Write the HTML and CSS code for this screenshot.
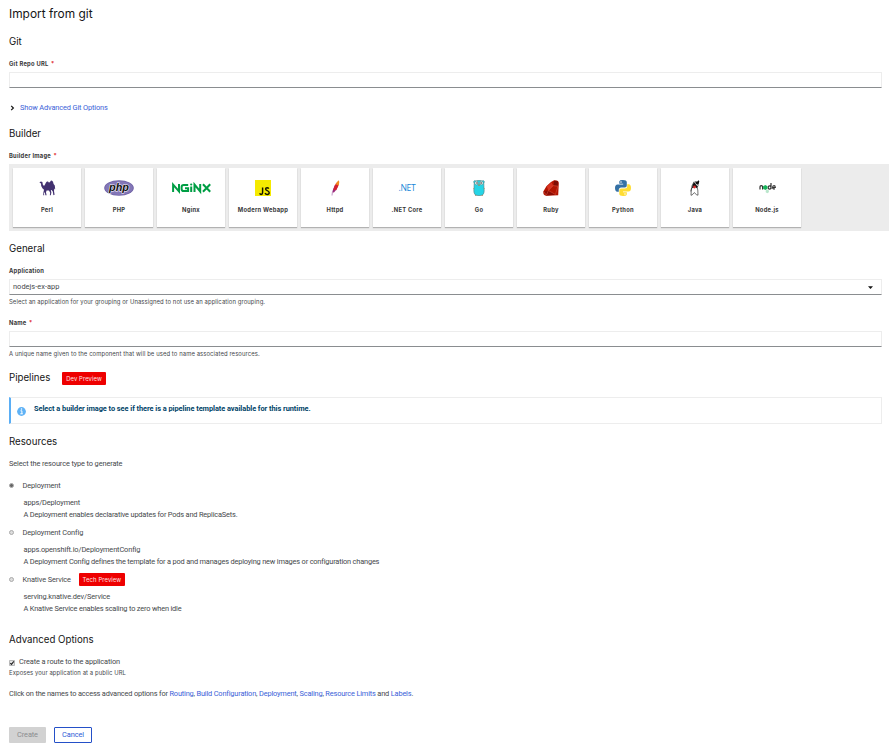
FILE: index.html
```html
<!DOCTYPE html>
<html lang="en">
<head>
<meta charset="utf-8">
<title>Import from git</title>
<link rel="stylesheet" href="styles.css">
</head>
<body>
<form class="page">
  <h1 class="title">Import from git</h1>

  <section class="section git">
    <h2>Git</h2>
    <label class="label">Git Repo URL <span class="req">*</span></label>
    <div class="input"></div>
    <a class="toggle"><svg width="5" height="6" viewBox="0 0 5 6"><path d="M1.2.8 3.4 3 1.2 5.2" fill="none" stroke="#151515" stroke-width="1.2"/></svg>Show Advanced Git Options</a>
  </section>

  <section class="section builder">
    <h2>Builder</h2>
    <label class="label">Builder Image <span class="req">*</span></label>
    <div class="tiles">
      <div class="tile">
        <svg width="17" height="16" viewBox="0 0 17 16"><path d="M.4 2.5 1.8 1.4 3.4 2 3.8 4.6 5 6 6 4.4 7 2.6 8 1.4 9 1.6 9.8 2.6 10.8 2.2 11.8.8 12.8.4 14 1.8 14.6 4 15.8 5.6 16.2 9.2 15.4 8.6 15 11 15.6 14.8 14.4 15.3 13.8 11.6 12.6 10 11.8 10.2 12.4 12.6 11.8 15.3 10.8 15.2 11.2 12.8 10 10.4 7.6 10.6 7 12.2 7.6 15.3 6.4 15.2 5.8 12 5 13.4 5.2 15.3 4.2 15.2 4.4 12.4 5 9.8 3.4 8.2 2.2 6 2 3.6Z" fill="#423170"/></svg>
        <span>Perl</span>
      </div>
      <div class="tile">
        <svg width="30" height="16" viewBox="0 0 30 16"><ellipse cx="15" cy="8" rx="14.8" ry="7.8" fill="#6f62a6"/><ellipse cx="15" cy="8" rx="13.8" ry="6.9" fill="#8377b7"/><text class="php-logo" x="15" y="10.8" text-anchor="middle" textLength="20" lengthAdjust="spacingAndGlyphs">php</text></svg>
        <span>PHP</span>
      </div>
      <div class="tile">
        <svg width="39" height="16" viewBox="0 0 39 16"><path d="M1.1 12V4.6L7 11.4V4M16.2 4.9H11.7Q9.6 4.9 9.6 7v2q0 2.1 2.1 2.1h4.4V8.3H13M19.2 6.6V12M22.5 12V4.6L28.2 11.4V4M31 4.2 38.2 11.8M38.2 4.2 31 11.8" fill="none" stroke="#009e44" stroke-width="2"/><circle cx="19.2" cy="4.5" r="1.1" fill="#009e44"/></svg>
        <span>Nginx</span>
      </div>
      <div class="tile">
        <svg width="16" height="16" viewBox="0 0 16 16"><path d="M0 0h16v16H0z" fill="#f5ea00"/><path d="M7.6 7.4v5.2q0 1.8-1.5 1.8-1 0-1.4-1.1M13.8 8.7q-.6-1-1.7-1-1.5 0-1.5 1.3 0 1 1.6 1.6 2 .7 2 2.1 0 1.7-2 1.7-1.5 0-2.2-1.3" fill="none" stroke="#151500" stroke-width="1.45"/></svg>
        <span>Modern Webapp</span>
      </div>
      <div class="tile">
        <svg width="9" height="16" viewBox="0 0 9 16"><path d="M1 15.5Q1 12.4 2.4 9.6" fill="none" stroke="#b88abf" stroke-width=".9"/><path d="M1.6 12.7Q1.7 8.8 4 5L7 5.6Q6.4 9.8 3.2 12.2Z" fill="#9b2779"/><path d="M2.5 9.8Q3 6 5.2 3L7.9 2.5Q8 6.5 5.2 10.2Z" fill="#d4202d"/><path d="M4.6 4.3Q5.6 1.5 7.8.2 9 2 7.8 5.5Z" fill="#f28b20"/></svg>
        <span>Httpd</span>
      </div>
      <div class="tile">
        <svg width="24" height="16" viewBox="0 0 24 16"><text class="net-logo" x="12" y="11.2" text-anchor="middle">.NET</text></svg>
        <span>.NET Core</span>
      </div>
      <div class="tile">
        <svg width="12" height="16" viewBox="0 0 12 16"><path d="M1.2 3.2Q-.2 1.2 1.8.6L3 1Q6-.6 9 1l1.2-.4Q12.2 1.2 10.8 3.2L11 8q.8 6-2 7.2-3 .9-6 0Q.2 14 1 8Z" fill="#25d5e6" stroke="#547b80" stroke-width=".6"/><circle cx="3.6" cy="3" r="1.8" fill="#fff" stroke="#466" stroke-width=".4"/><circle cx="8.3" cy="3" r="1.8" fill="#fff" stroke="#466" stroke-width=".4"/><circle cx="4" cy="3" r=".7"/><circle cx="8.1" cy="3" r=".7"/><path d="M5 4.4h2v1.3H5z" fill="#9d8a67"/><path d="M.2 8.6h1M10.8 8.6h1M2 15.6h1.4M8.6 15.6H10" stroke="#b49b77"/></svg>
        <span>Go</span>
      </div>
      <div class="tile">
        <svg width="16" height="16" viewBox="0 0 16 16"><path d="M11.2.3Q16 0 15.8 3.6L15.2 15.3 3 15.8Q0 15.6.3 11.6L3.4 6.2 8 2Z" fill="#b11401"/><path d="M11.2.8 15 1.4 14.8 6 10.6 5.6Z" fill="#7d0d05"/><path d="M3.8 6.4 8.6 2.2 10.2 5.8 5.4 10.5Z" fill="#d8321f"/><path d="M.7 11.8 5.4 10.5 12.6 14.8 3.4 15.4Z" fill="#8b0c04"/><path d="m5.4 10.5 4.8-4.9 4.9.6M1 11.9l2.2 3M5.4 10.5l-2 4.6M5.4 10.5l7 4 2.5-8.2" fill="none" stroke="#e2604c" stroke-width=".45"/></svg>
        <span>Ruby</span>
      </div>
      <div class="tile">
        <svg width="16" height="16" viewBox="0 0 16 16"><path d="M8 0C4.6 0 4.3 1 4.3 2v1.8h3.9v.6H2.5C1 4.4 0 5.6 0 8s.9 3.7 2.3 3.7h1.5V9.8c0-1.3 1-2.3 2.3-2.3h3.8c1.1 0 1.9-.9 1.9-2V2C11.8.7 10.4 0 8 0Z" fill="#3571a5"/><path d="M8 16c3.4 0 3.8-1 3.8-2v-1.8H8v-.6h5.6C15 11.6 16 10.4 16 8s-.9-3.7-2.3-3.7h-1.5v1.9c0 1.3-1 2.3-2.3 2.3H6.2c-1.1 0-1.9.9-1.9 2V14c0 1.3 1.3 2 3.7 2Z" fill="#fd3"/><circle cx="6" cy="2.1" r=".75" fill="#fff"/><circle cx="10" cy="13.9" r=".75" fill="#fff"/></svg>
        <span>Python</span>
      </div>
      <div class="tile">
        <svg width="10" height="16" viewBox="0 0 10 16"><path d="M4.2 1.5 2 5.8 1.2 11 1 15.3 2.3 14.8 4.2 12.6 6.7 14.8 8 15.2 7.8 10 6.8 6" fill="#fff" stroke="#333" stroke-width=".7"/><path d="M4 2 5 3.2 7.6 6.6 7 8.2 5.2 7 2 8.2 2.4 5.4Z" fill="#111"/><path d="M5.4.9 7 1.8 8.6.3 9.3 1.2 8.7 4 7.3 4.7 5.4 3.2Z" fill="#111"/><circle cx="4.5" cy="7" r="1.4" fill="#dc2b2b"/><path d="M1.6 8 .7 11.4M7.4 7 8.5 4.5" stroke="#222" stroke-width=".6"/></svg>
        <span>Java</span>
      </div>
      <div class="tile">
        <svg width="17" height="16" viewBox="0 0 17 16"><path d="M1 9.4V6.8Q1 5.6 2.3 5.6T3.6 6.8v2.6M12 3v6M12 7.5a1.4 1.6 0 1 1-2.8 0 1.4 1.6 0 1 1 2.8 0M13.6 7.5h2.7Q16.2 5.6 15 5.6q-1.4 0-1.4 1.9 0 1.7 2.3 1.3" fill="none" stroke="#333" stroke-width="1.2"/><path d="m6.3 5 2.2 1.2v2.6L6.3 10 4.1 8.8V6.2Z" fill="#17b35a"/><path d="m8.3 9.6 1.6.9v1.8l-1.6.9-1.6-.9v-1.8Z" fill="#b9e6cb"/></svg>
        <span>Node.js</span>
      </div>
    </div>
  </section>

  <section class="section general">
    <h2>General</h2>
    <label class="label">Application</label>
    <div class="input select"><span>nodejs-ex-app</span><svg width="5" height="3" viewBox="0 0 5 3"><path d="M0 .2h5L2.5 2.9Z" fill="#151515"/></svg></div>
    <p class="help">Select an application for your grouping or Unassigned to not use an application grouping.</p>
    <label class="label name">Name <span class="req">*</span></label>
    <div class="input"></div>
    <p class="help">A unique name given to the component that will be used to name associated resources.</p>
  </section>

  <section class="section pipelines">
    <div class="heading-row"><h2>Pipelines</h2><span class="badge">Dev Preview</span></div>
    <div class="alert">
      <svg width="9" height="9" viewBox="0 0 9 9"><circle cx="4.5" cy="4.5" r="4.4" fill="#5fb2f6"/><path d="M3.5 3.8h1.4v3M3.3 6.8h2.5" fill="none" stroke="#fff"/><circle cx="4.5" cy="2.1" r=".75" fill="#fff"/></svg>
      <strong>Select a builder image to see if there is a pipeline template available for this runtime.</strong>
    </div>
  </section>

  <section class="section resources">
    <h2>Resources</h2>
    <p class="intro">Select the resource type to generate</p>
    <div class="option">
      <div class="option-head"><i class="radio checked"></i>Deployment</div>
      <p>apps/Deployment</p><p>A Deployment enables declarative updates for Pods and ReplicaSets.</p>
    </div>
    <div class="option">
      <div class="option-head"><i class="radio"></i>Deployment Config</div>
      <p>apps.openshift.io/DeploymentConfig</p><p>A Deployment Config defines the template for a pod and manages deploying new images or configuration changes</p>
    </div>
    <div class="option">
      <div class="option-head"><i class="radio"></i>Knative Service<span class="badge">Tech Preview</span></div>
      <p>serving.knative.dev/Service</p><p>A Knative Service enables scaling to zero when idle</p>
    </div>
  </section>

  <section class="section advanced">
    <h2>Advanced Options</h2>
    <div class="check-row"><svg width="6" height="6" viewBox="0 0 6 6"><path d="M.5.5h5v5h-5z" fill="#e4e4e4" stroke="#aaa" stroke-width=".8"/><path d="M1.3 3.1 2.5 4.4 4.8 1.4" fill="none" stroke="#222" stroke-width="1.1"/></svg>Create a route to the application</div>
    <p class="help">Exposes your application at a public URL</p>
    <p class="links">Click on the names to access advanced options for <a>Routing</a>, <a>Build Configuration</a>, <a>Deployment</a>, <a>Scaling</a>, <a>Resource Limits</a> and <a>Labels</a>.</p>
  </section>

  <div class="actions"><button type="button" class="btn create" disabled>Create</button><button type="button" class="btn cancel">Cancel</button></div>
</form>
</body>
</html>
```
FILE: styles.css
```css
* { box-sizing: border-box; }
html, body { margin: 0; background: #fff; }
body { height: 751px; overflow: hidden; color: #45484b; font: 7.4px/12px Roboto, sans-serif; letter-spacing: -.17px; }
h1, h2, p { margin: 0; }
svg { display: block; flex: none; }
a { color: #3a62d8; }

.page { padding: 6px 7px 0 9px; }
.title { height: 16px; font: 400 11.9px/16px Inter, sans-serif; letter-spacing: 0; color: #151515; }
h2 { height: 14px; font: 400 9.7px/14px Inter, sans-serif; letter-spacing: 0; color: #151515; white-space: nowrap; }
.section { display: flex; flex-direction: column; }

.label { height: 8px; margin-top: 11px; font: 700 5.8px/8px Inter, sans-serif; letter-spacing: .25px; color: #383838; white-space: pre; }
.req { color: #e0242b; margin-left: .8px; }
.input { height: 16px; margin-top: 4px; border: 1px solid #ededed; border-bottom-color: #8a8d90; }
.help { height: 8px; margin-top: 3px; font: 400 5.9px/8px Inter, sans-serif; letter-spacing: .09px; }

.git { margin-top: 13px; }
.toggle { display: flex; align-items: center; gap: 5px; height: 12px; margin: 14px 0 0 1px; letter-spacing: -.14px; }
.toggle svg { margin-top: -1px; }

.builder { margin-top: 13px; }
.tiles { display: flex; gap: 4px; height: 67px; margin: 4px -7px 0 0; padding: 4px; background: #ececec; }
.tile { width: 68px; height: 59px; padding-top: 12px; background: #fff; box-shadow: 0 1px 1px rgba(3, 3, 3, .25); display: flex; flex-direction: column; align-items: center; }
.tile span { height: 8px; margin-top: 10px; font: 700 5.8px/8px Inter, sans-serif; letter-spacing: .25px; color: #383838; white-space: nowrap; }
.php-logo { font: italic 700 11px "Liberation Sans", sans-serif; fill: #111; stroke: #fff; stroke-width: 1px; paint-order: stroke; letter-spacing: 0; }
.net-logo { font: 400 8.6px "Open Sans", sans-serif; fill: #1688d8; letter-spacing: -.35px; }

.general { margin-top: 11px; }
.select { display: flex; align-items: center; justify-content: space-between; padding: 0 8px 0 3px; letter-spacing: .04px; }
.label.name { margin-top: 13px; }

.pipelines { margin-top: 13px; }
.heading-row { display: flex; align-items: center; height: 14px; }
.heading-row h2 { width: 53px; }
.badge { flex: none; width: 44px; height: 13px; border-radius: 1px; background: #e00; color: #ffe3e3; font: 400 5.9px/14px Inter, sans-serif; letter-spacing: .1px; text-align: center; white-space: nowrap; }
.alert { display: flex; height: 27px; margin-top: 12px; padding: 5px 0 0 6px; gap: 8px; border: 1px solid #ededed; border-left: 2px solid #5aaef5; color: #004368; }
.alert svg { margin-top: 4px; }
.alert strong { height: 12px; letter-spacing: -.05px; }

.resources { margin-top: 11px; }
.intro { height: 12px; margin-top: 9px; }
.intro, .option p, .check-row { letter-spacing: -.125px; }
.option { height: 47px; }
.intro + .option { margin-top: 9px; }
.option-head { display: flex; align-items: center; height: 13px; margin-bottom: 5px; letter-spacing: -.12px; }
.option p { height: 12px; padding-left: 14.5px; white-space: nowrap; }
.option p:last-child { letter-spacing: -.18px; }
.option .badge { width: 46px; margin-left: 8px; }
.radio { width: 5px; height: 5px; margin: 0 8.5px 0 0; border: 1px solid #aaa; border-radius: 50%; background: #ddd; }
.radio.checked { background: #666; }

.advanced { margin-top: 13px; }
.check-row { display: flex; align-items: center; gap: 4px; height: 12px; margin-top: 9px; }
.check-row svg { margin-top: 2px; }
.advanced .help { margin-top: 1px; }
.links { height: 12px; margin-top: 11px; letter-spacing: -.174px; white-space: nowrap; }

.actions { display: flex; gap: 8px; margin-top: 27px; }
.btn { height: 16px; padding: 0 0 1px; border: 0; border-radius: 1px; font: 7.4px/14px Roboto, sans-serif; letter-spacing: -.12px; text-align: center; }
.create { width: 37px; background: #d2d2d2; color: #8a8d90; }
.cancel { width: 38px; background: #fff; border: 1px solid #2450c8; color: #2e5bd6; line-height: 12px; }
```
